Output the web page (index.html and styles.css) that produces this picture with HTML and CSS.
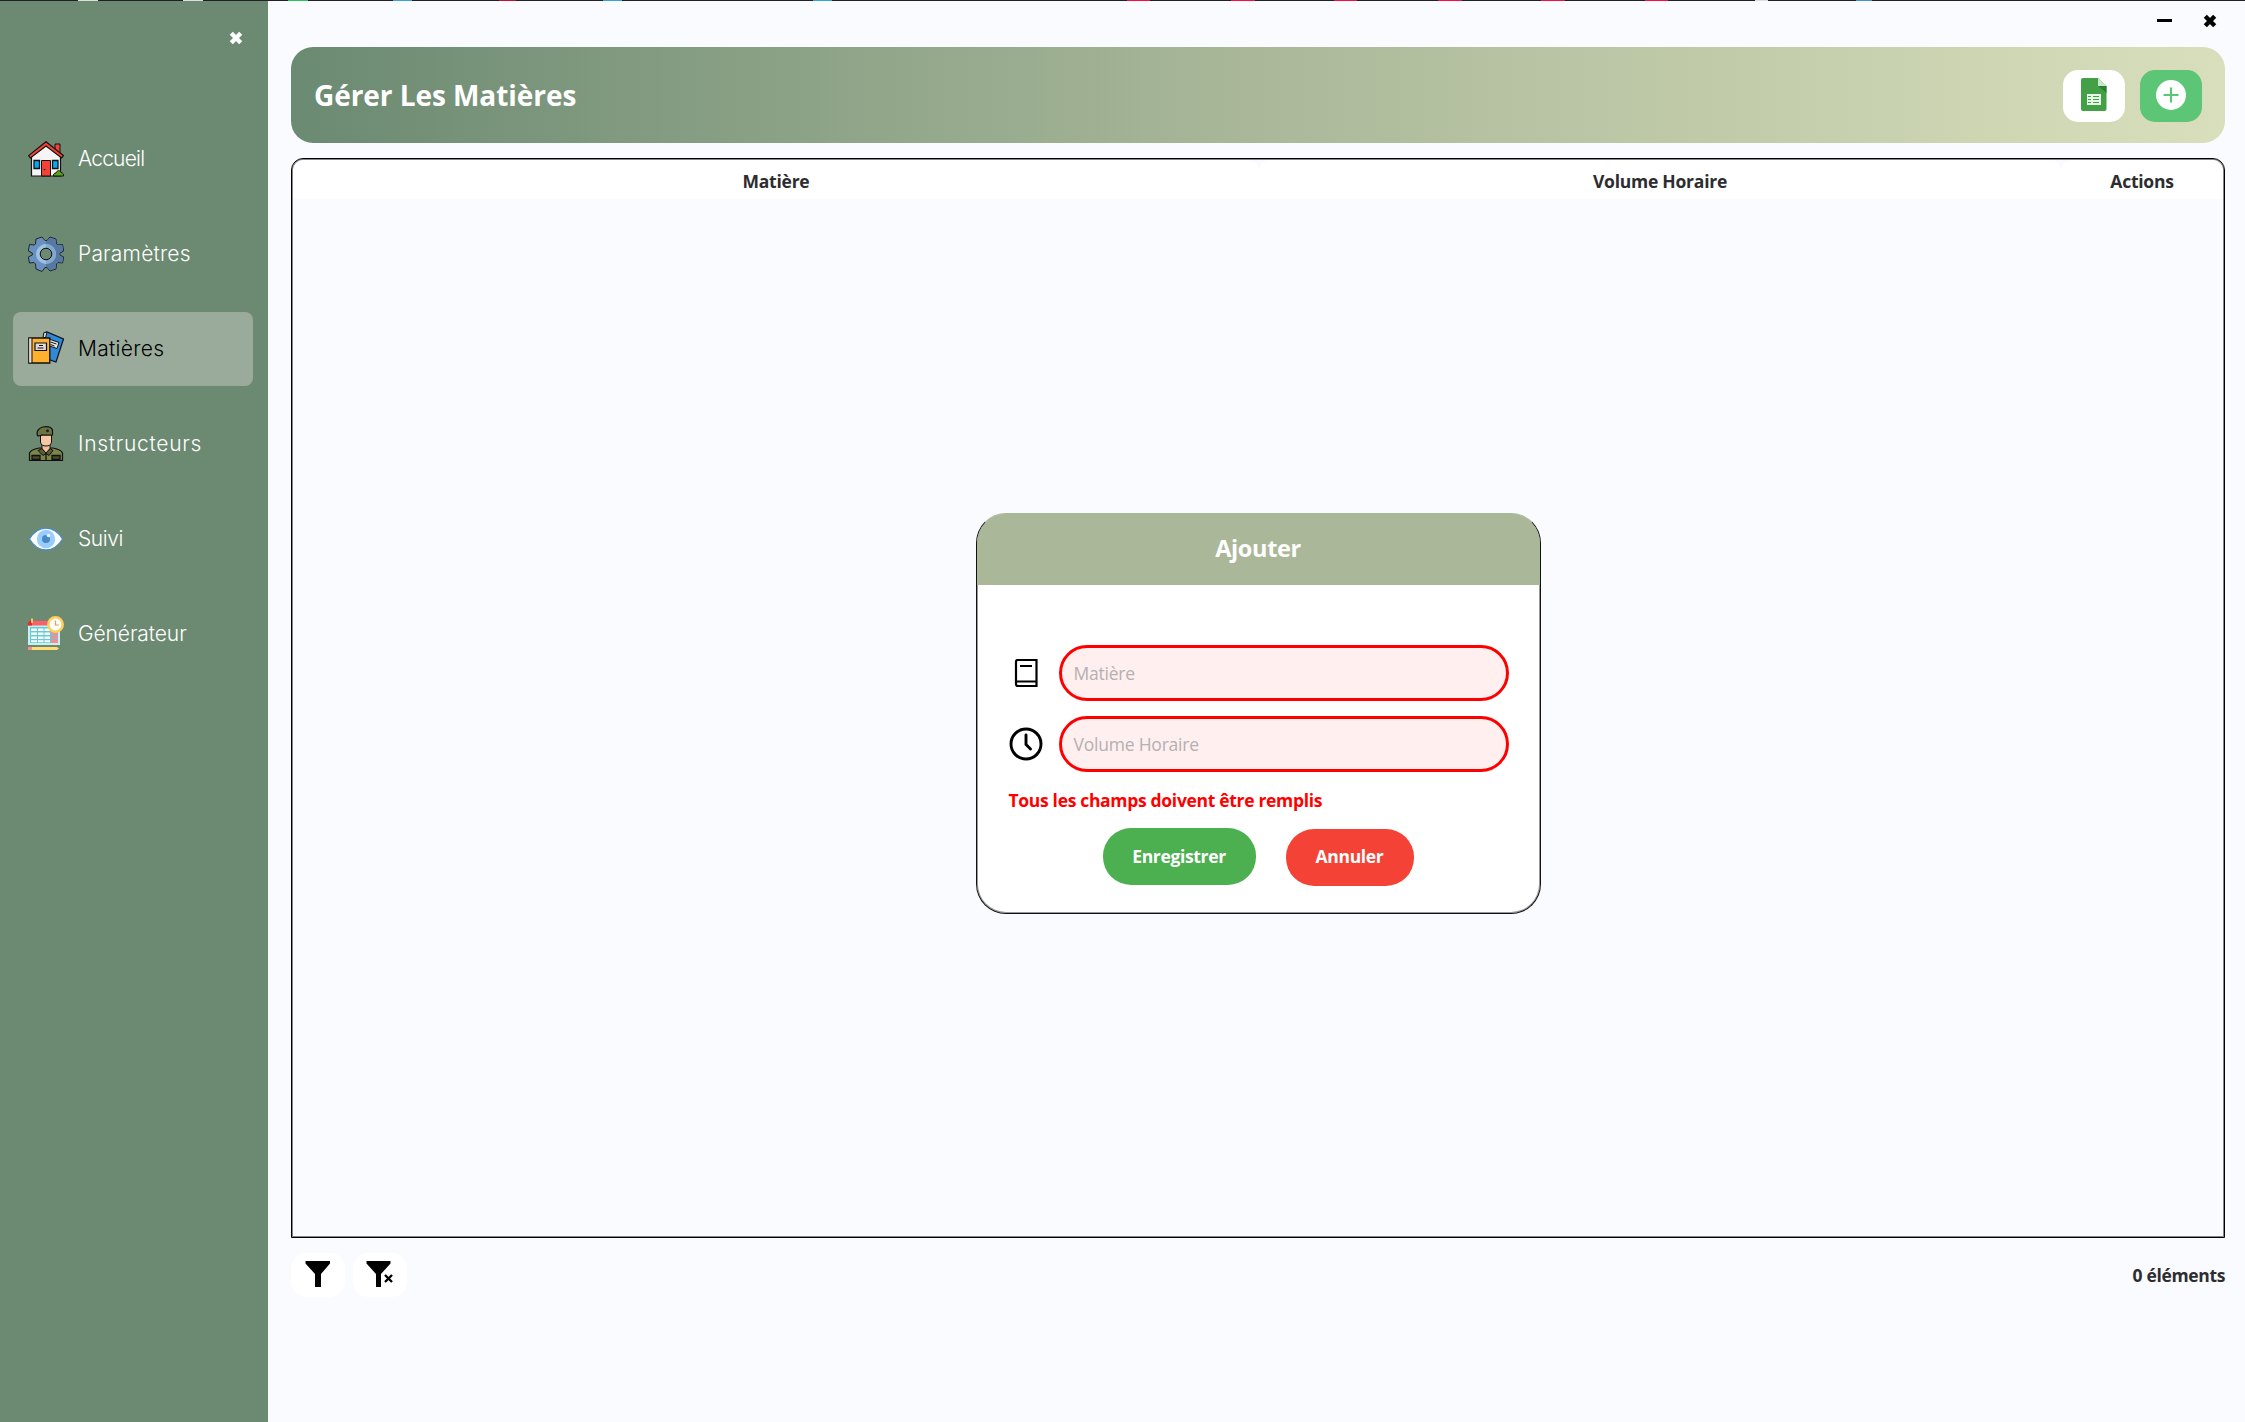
FILE: index.html
```html
<!DOCTYPE html>
<html lang="fr">
<head>
<meta charset="utf-8">
<title>Gérer Les Matières</title>
<link rel="stylesheet" href="styles.css">
</head>
<body>
<div class="strip"></div>
<div class="app">
<aside class="sidebar">
<button class="collapse" aria-label="Réduire"><svg class="cross" viewBox="0 0 14 14"><path d="M2.300 2.300l9.400 9.400M11.700 2.300l-9.400 9.400"/></svg></button>
<nav class="menu">
<a class="item"><svg class="ico" viewBox="0 0 36 36"><path d="M27 3h5v13l-5-5z" fill="#f44336" stroke="#111"/><path d="M3.500 35V14L18 3l14.500 11v21z" fill="#f5f5f5" stroke="#111" stroke-width="1.200"/><path d="M.6 14.600L18 .7l17.400 13.900-1.800 2.400L18 5 2.400 17z" fill="#f44336" stroke="#111" stroke-width="1.200"/><path d="M6 19.500h5.500v8H6zM24.500 19.500H30v8h-5.500z" fill="#03a9f4" stroke="#111" stroke-width="1.300"/><path d="M13.500 35V19.500h9V35z" fill="#f44336" stroke="#111"/><circle cx="16.500" cy="28.500" r=".8"/><path d="M25.500 35c-.5-2 1-3 2.500-3 1-3 4-3 5-.5 2 .5 3 2 2.500 3.500z" fill="#58a51c" stroke="#111"/></svg><span class="accueil">Accueil</span></a>
<a class="item"><svg class="ico" viewBox="0 0 36 36"><path d="M14 1l3 3.500h2L22 1l6 2 .5 5 1.500 1 4.500-.5 1.300 6.500-4 2v2l4 2-1.300 6-4.500-.5-1.500 1.500-.5 5-6 2-3-3.500h-2L14 35.500 8 33l-.5-5L6 26.500l-4.500.5L.3 21l4-2v-2l-4-2L1.500 8.500 6 9l1.500-1L8 3z" fill="#6a90c0" stroke="#151b26" stroke-width=".9"/><path d="M18 5h1.200L22.300 2l5.200 1.600.5 5 2 1 4.200-.5 1 5.500-3.800 2v3l3.800 2-1 5-4.200-.5-2 1.700-.5 4.800-5.200 1.700-3.100-3.300H18z" fill="#5679a4"/><circle cx="18" cy="18" r="8" fill="none" stroke="#9cc2e2" stroke-width="4"/><path d="M18 8a10 10 0 0 1 0 20v-4a6 6 0 0 0 0-12z" fill="#82a8cd"/><circle cx="18" cy="18" r="5.800" fill="#6c8972" stroke="#111"/></svg><span class="parametres">Paramètres</span></a>
<a class="item active"><svg class="ico" viewBox="0 0 36 36"><path d="M16 3l3-2 16.500 7L28 31l-14-5z" fill="#2f88d8" stroke="#111" stroke-width="1.200"/><path d="M15 6l1-4.500 3-.5-1.500 6z" fill="#ddd" stroke="#111"/><path d="M21 8l10 3.500-2 6-9-3z" fill="#e8e8e8" stroke="#111"/><path d="M22.500 11l6 2M22.500 13.500l4 1.500" stroke="#111"/><path d="M.8 7h21v25H.8z" fill="#ffb02e" stroke="#111" stroke-width="1.300"/><path d="M1.200 7.500h2.500v24H1.200z" fill="#ddd"/><path d="M4 7v25" stroke="#111"/><path d="M7 12h11.500v7.500H7z" fill="#ddd" stroke="#111" stroke-width="1.200"/><path d="M11 14.500h4M9.500 17h6" stroke="#111"/></svg><span class="matieres">Matières</span></a>
<a class="item"><svg class="ico" viewBox="0 0 36 36"><path d="M1.500 34.500V27c1-3 5-4 9.500-5h14c4.500 1 8.500 2 9.500 5v7.500z" fill="#7c8449" stroke="#111" stroke-width="1.200"/><path d="M14 18h8v5l-4 4-4-4z" fill="#f3c19d" stroke="#111"/><path d="M12.500 9h11v7c0 3-3 4-5.500 4s-5.500-1-5.500-4z" fill="#f6c8a4" stroke="#111"/><path d="M9.500 9.500C8 5 11 2 15 1c5-1 10 0 9.500 4.500V9H15c-2-.5-4 2-5.500.5z" fill="#6c7440" stroke="#111" stroke-width="1.200"/><circle cx="19.500" cy="4.800" r="1.500" fill="#222"/><path d="M14 22.500l4 4.500 4-4.500 3 2-4 5-3-2-3 2-5-5z" fill="#565f32" stroke="#111"/><path d="M18 27v7M4 29.500h8v4H4zM24 29.500h8v4h-8z" fill="#444d2a" stroke="#111" stroke-width="1.300"/></svg><span class="instructeurs">Instructeurs</span></a>
<a class="item"><svg class="ico" viewBox="0 0 36 36"><path d="M1.500 18C10 3.500 26 3.500 34.500 18 26 32.500 10 32.500 1.500 18z" fill="#fff" stroke="#4a8bcb" stroke-width="1.200"/><circle cx="18" cy="18" r="9.200" fill="#99ccff"/><circle cx="18" cy="18" r="4" fill="#4788c7"/><circle cx="20.500" cy="14.500" r="1.800" fill="#e8f4ff"/></svg><span class="suivi">Suivi</span></a>
<a class="item"><svg class="ico" viewBox="0 0 36 36"><path d="M0 8h32v21H0z" fill="#c8f0f2"/><path d="M0 9l2-4h30v4.500H0z" fill="#ff5d69"/><path d="M0 9.500V7l2-2.500h2v5z" fill="#ee2436"/><path d="M3 2.500h2V7H3z" fill="#ffc94f"/><path d="M2 11h28v16H2z" fill="#5fccd8"/><path d="M23 11h7v16h-7z" fill="#f98a92"/><path d="M3 12.500h6v2.500H3zm7 0h5.500v2.500H10zm6.500 0H22v2.500h-5.500zM3 16.500h6V19H3zm7 0h5.500V19H10zm6.500 0H22V19h-5.500zM3 20.500h6V23H3zm7 0h5.500V23H10zm6.500 0H22V23h-5.500zM3 24.300h6v2H3zm7 0h5.500v2H10zm6.500 0H22v2h-5.500z" fill="#fff"/><path d="M23 19.500h7M23 23.500h7" stroke="#5fccd8"/><path d="M4 31h25l2 1.500-2 1.500H4z" fill="#ffdb72"/><path d="M0 31h4v3H0z" fill="#f98a92"/><circle cx="27.500" cy="8.500" r="7.200" fill="#fff" stroke="#ffcf5c" stroke-width="2.600"/><path d="M27.500 4.500V9H31" fill="none" stroke="#f29a4a" stroke-width="1.200"/></svg><span class="generateur">Générateur</span></a>
</nav>
</aside>
<main class="main">
<div class="winbar"><i class="min"></i><svg class="cross" viewBox="0 0 14 14"><path d="M2.300 2.300l9.400 9.400M11.700 2.300l-9.400 9.400"/></svg></div>
<header class="head">
<h1>Gérer Les Matières</h1>
<div class="tools">
<button class="tool"><svg width="26" height="34" viewBox="0 0 26 34"><path d="M2 0h15l8.500 8v23a2 2 0 0 1-2 2H2a2 2 0 0 1-2-2V2a2 2 0 0 1 2-2z" fill="#43a047"/><path d="M17 0l8.500 8H17z" fill="#c8e6c9"/><path d="M17 8h8.500v7z" fill="#2e7d32"/><path d="M6 16h14v11H6z" fill="#e8f5e9"/><path d="M7 18.500h3M12 18.500h6M7 21.500h3M12 21.500h6M7 24.500h3M12 24.500h6" stroke="#43a047"/></svg></button>
<button class="tool add"><svg width="30" height="30" viewBox="0 0 30 30"><circle cx="15" cy="15" r="15" fill="#fff"/><path d="M15 7.500v15M7.500 15h15" stroke="#5cc576" stroke-width="2.200"/></svg></button>
</div>
</header>
<section class="table">
<div class="cols"><div>Matière</div><div>Volume Horaire</div><div>Actions</div></div>
<div class="rows">
<form class="dialog">
<h2>Ajouter</h2>
<div class="fields">
<label class="field"><svg viewBox="0 0 34 34"><path d="M7.500 4h20v26H9a2 2 0 0 1-2-2V5.500A1.500 1.500 0 0 1 8.500 4zM7 25.500h20M11 10h12" fill="none" stroke="#000" stroke-width="2.200"/></svg><span class="input">Matière</span></label>
<label class="field"><svg viewBox="0 0 34 34"><circle cx="17" cy="17" r="15" fill="none" stroke="#000" stroke-width="2.900"/><path d="M17 8v9.500l4.500 4.500" fill="none" stroke="#000" stroke-width="2.900" stroke-linecap="round"/></svg><span class="input">Volume Horaire</span></label>
</div>
<p class="error">Tous les champs doivent être remplis</p>
<div class="actions"><span class="btn">Enregistrer</span><span class="btn cancel">Annuler</span></div>
</form>
</div>
</section>
<footer class="foot">
<div class="filters"><button class="filter"><svg viewBox="0 0 28 28"><path d="M1.500 1h24.500v2.500L17 14v13h-6V14L1.500 3.500z"/></svg></button><button class="filter"><svg viewBox="0 0 28 28"><path d="M.5 1h24v2.500L15 14v13h-5V14L.5 3.500z"/><path d="M19 15l7 7M26 15l-7 7" stroke="#000" stroke-width="2.400"/></svg></button></div>
<span class="count">0 éléments</span>
</footer>
</main>
</div>
</body>
</html>
```
FILE: styles.css
```css
* { box-sizing: border-box; }
body { margin: 0; background: #fafbff; color: #2d2d30; font: 17.5px "Open Sans", "Noto Sans", sans-serif; height: 1422px; display: flex; flex-direction: column; overflow: hidden; }
h1, h2, p { margin: 0; }
button { border: 0; padding: 0; background: none; display: flex; align-items: center; justify-content: center; }
svg { display: block; }

/* window edge */
.strip { height: 1px; flex: none; background: linear-gradient(90deg, #221f26 78px, #ddd 78px 98px, #221f26 98px 183px, #ddd 183px 203px, #221f26 203px 288px, #25c558 288px 308px, #221f26 308px 393px, #35a5d8 393px 412px, #221f26 412px 499px, #c8102e 499px 516px, #221f26 516px 603px, #35a5d8 603px 622px, #221f26 622px 813px, #35a5d8 813px 832px, #221f26 832px 1127px, #ff0a40 1127px 1150px, #221f26 1150px 1231px, #ff0a40 1231px 1255px, #221f26 1255px 1334px, #ff0a40 1334px 1357px, #221f26 1357px 1438px, #ff0a40 1438px 1462px, #221f26 1462px 1541px, #ff0a40 1541px 1565px, #221f26 1565px 1645px, #ff0a40 1645px 1668px, #221f26 1668px 1755px, #ddd 1755px 1768px, #221f26 1768px 1856px, #4a90d0 1856px 1872px, #221f26 1872px); }
.app { flex: 1; display: flex; }

/* sidebar */
.sidebar { width: 268px; flex: none; background: #6c8972; padding: 30px 15px 0 13px; }
.collapse { margin-left: auto; margin-right: 10px; color: #fff; }
.cross { width: 14px; height: 14px; stroke: currentColor; stroke-width: 4.400; fill: none; }
.menu { display: flex; flex-direction: column; gap: 21px; margin-top: 77px; }
.item { height: 74px; border-radius: 8px; display: flex; align-items: center; padding: 0 15px; gap: 14px; color: #fff; font: 300 21px/30px Inter, "Open Sans", sans-serif; }
.item.active { background: #9aab9b; color: #000; }
.ico { width: 36px; height: 36px; flex: none; margin-bottom: 1px; }
.accueil { letter-spacing: -.8px; }
.parametres { letter-spacing: .2px; }
.matieres { letter-spacing: .3px; }
.instructeurs { letter-spacing: .7px; }
.suivi { letter-spacing: -.4px; }
.generateur { letter-spacing: -.1px; }

/* page */
.main { flex: 1; min-width: 0; padding: 0 20px 0 23px; }
.winbar { height: 46px; display: flex; justify-content: flex-end; gap: 31px; padding: 13px 8px 0 0; color: #000; }
.min { width: 15px; height: 3px; background: #000; margin-top: 5px; }
.head { height: 96px; border-radius: 22px; background: linear-gradient(90deg, #6b8a72, #aab899 50%, #d9dfbc); display: flex; align-items: center; justify-content: space-between; padding: 0 23px; }
h1 { color: #fff; font-size: 28px; line-height: 38px; letter-spacing: -.06px; }
.tools { display: flex; gap: 15px; padding-top: 1px; }
.tool { width: 62px; height: 52px; border-radius: 15px; background: #fff; }
.tool svg { margin-bottom: 2px; }
.add { background: #5cc576; }
.table { margin-top: 15px; height: 1080px; border: 1px solid #000; border-radius: 12px 12px 0 0; box-shadow: inset 0 0 0 1px #85858a; padding: 1px; }
.cols { display: grid; grid-template: 39px / 966px 802px 1fr; text-align: center; font-weight: 700; line-height: 42px; letter-spacing: -.24px; }
.cols div { background: #fff; border-radius: 11px 11px 0 0; }
.rows { padding-top: 314px; }

/* dialog */
.dialog { width: 565px; height: 401px; margin: 0 auto; border: 1px solid #111; border-top-color: #aab899; border-radius: 30px; background: #fff; box-shadow: inset 0 0 0 1px #999; overflow: hidden; }
h2 { height: 71px; background: #aab899; color: #fff; font-size: 23.5px; line-height: 69px; letter-spacing: -.35px; text-align: center; }
.fields { display: flex; flex-direction: column; gap: 15px; padding: 60px 31px 0 32px; }
.field { display: flex; align-items: center; justify-content: space-between; }
.field svg { width: 34px; height: 34px; }
.input { width: 450px; height: 56px; border: 3px solid #f00; border-radius: 28px; background: #ffefef; color: #b5b0b3; line-height: 51px; letter-spacing: -.22px; padding-left: 12px; }
.error { color: #f00; font-weight: 700; padding: 15px 0 0 32px; line-height: 27px; letter-spacing: -.32px; }
.actions { display: flex; justify-content: center; gap: 30px; margin-top: 14px; }
.btn { height: 57px; width: 153px; border-radius: 28px; color: #fff; font-weight: 700; text-align: center; line-height: 57px; letter-spacing: -.35px; background: #4caf50; }
.cancel { width: 128px; background: #f44336; margin-top: 1px; line-height: 55px; }

/* footer */
.foot { display: flex; justify-content: space-between; align-items: center; margin-top: 15px; height: 44px; }
.filters { display: flex; gap: 8px; }
.filter { width: 54px; height: 44px; border-radius: 15px; background: #fff; }
.filter svg { width: 28px; height: 28px; margin-bottom: 2px; }
.count { font-weight: 700; letter-spacing: -.35px; padding-bottom: 1px; }
```
